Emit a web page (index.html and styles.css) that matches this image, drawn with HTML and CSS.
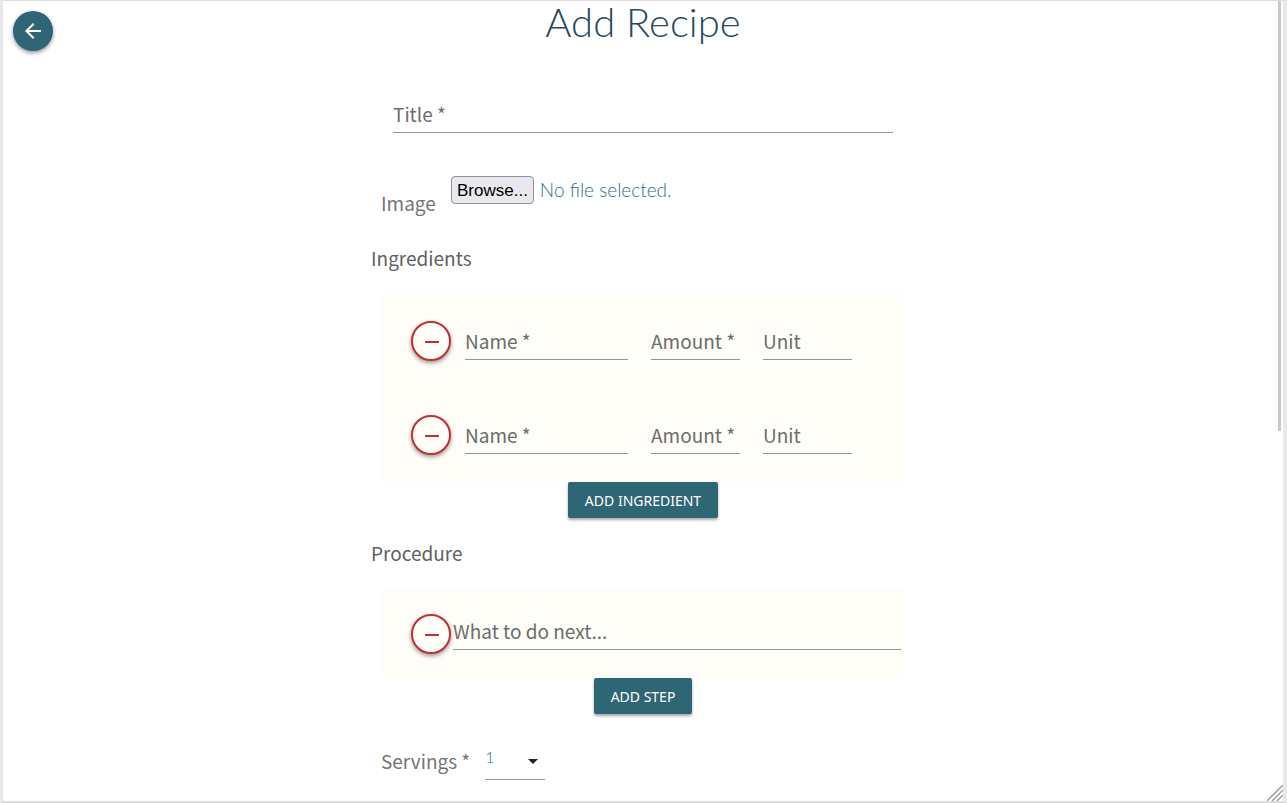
FILE: index.html
```html
<!DOCTYPE html>
<html lang="en">
<head>
<meta charset="utf-8">
<title>Add Recipe</title>
<link rel="stylesheet" href="styles.css">
</head>
<body>
<main class="window">
  <button class="round back" type="button" aria-label="Back">
    <svg width="24" height="24" viewBox="0 0 24 24" fill="currentColor" aria-hidden="true"><path d="M20 11H7.83l5.59-5.59L12 4l-8 8 8 8 1.41-1.41L7.83 13H20v-2z"/></svg>
  </button>
  <h1 class="heading">Add Recipe</h1>
  <form class="form">
    <input class="field title" type="text" placeholder="Title *" aria-label="Title">
    <div class="image-row">
      <span class="image-label">Image</span>
      <input class="file-input" id="image" type="file">
      <label class="browse" for="image">Browse...</label>
      <span class="file-name">No file selected.</span>
    </div>

    <h2 class="section">Ingredients</h2>
    <div class="panel">
      <div class="row">
        <button class="round remove" type="button" aria-label="Remove ingredient"><svg width="24" height="24" viewBox="0 0 24 24" fill="currentColor" aria-hidden="true"><path d="M6 12h14v2H6z"/></svg></button>
        <input class="field name" type="text" placeholder="Name *" aria-label="Name">
        <input class="field short" type="text" placeholder="Amount *" aria-label="Amount">
        <input class="field short" type="text" placeholder="Unit" aria-label="Unit">
      </div>
      <div class="row">
        <button class="round remove" type="button" aria-label="Remove ingredient"><svg width="24" height="24" viewBox="0 0 24 24" fill="currentColor" aria-hidden="true"><path d="M6 12h14v2H6z"/></svg></button>
        <input class="field name" type="text" placeholder="Name *" aria-label="Name">
        <input class="field short" type="text" placeholder="Amount *" aria-label="Amount">
        <input class="field short" type="text" placeholder="Unit" aria-label="Unit">
      </div>
    </div>
    <button class="add" type="button">ADD INGREDIENT</button>

    <h2 class="section">Procedure</h2>
    <div class="panel">
      <div class="row step">
        <button class="round remove" type="button" aria-label="Remove step"><svg width="24" height="24" viewBox="0 0 24 24" fill="currentColor" aria-hidden="true"><path d="M6 12h14v2H6z"/></svg></button>
        <input class="field what" type="text" placeholder="What to do next..." aria-label="Step">
      </div>
    </div>
    <button class="add" type="button">ADD STEP</button>

    <div class="servings-row">
      <label for="servings">Servings *</label>
      <div class="select-wrap">
        <select class="servings" id="servings"><option>1</option><option>2</option><option>3</option><option>4</option></select>
        <svg class="caret" width="10" height="5" viewBox="0 0 10 5" aria-hidden="true"><path d="M0 0h10L5 5z" fill="#212121"/></svg>
      </div>
    </div>
  </form>
  <div class="thumb"></div>
  <svg class="grip" width="16" height="16" viewBox="0 0 16 16" stroke="#999" stroke-width="1.4" aria-hidden="true"><path d="M0 16 16 0M5 16 16 5M10 16l6-6"/></svg>
</main>
</body>
</html>
```
FILE: styles.css
```css
* { box-sizing: border-box; }

body {
  margin: 0;
  background: #f0f0f0;
  color: #616161;
  font: 19px/28px "Noto Sans CJK SC", "Noto Sans", sans-serif;
}

.window {
  position: relative;
  height: 100vh;
  overflow: hidden;
  background: #fff;
  border: solid #ddd;
  border-width: 1px 4px 2px 3px;
  border-left-color: #e8e8e8;
  border-right-color: #e8e8e8;
}

.heading {
  margin: 0;
  color: #2b4a60;
  font: 300 40px/42px Lato, sans-serif;
  text-align: center;
}

.round {
  display: grid;
  place-items: center;
  flex: none;
  width: 40px;
  height: 40px;
  padding: 0;
  border: 0;
  border-radius: 50%;
  box-shadow: 0 2px 4px rgba(0, 0, 0, .4);
}

.back {
  position: absolute;
  top: 10px;
  left: 10px;
  background: #2f6675;
  color: #fff;
}

.remove {
  border: 2px solid #c03035;
  background: #fefdf8;
  color: #c03035;
}

.form {
  display: flex;
  flex-direction: column;
  width: 100%;
  max-width: 544px;
  margin: 0 auto;
}

.field {
  min-width: 0;
  height: 36px;
  padding: 0 0 3px;
  border: 0;
  border-bottom: 1px solid #949494;
  border-radius: 0;
  background: transparent;
  color: #616161;
  font: inherit;
}

.field::placeholder { color: #6d6d6d; opacity: 1; }

.title { margin: 54px 22px 0; }

.image-row {
  display: flex;
  align-items: flex-start;
  margin: 43px 11px 0 10px;
}

.image-label { width: 70px; padding-top: 13px; color: #757575; }

.file-input { position: absolute; opacity: 0; pointer-events: none; }

.browse {
  height: 28px;
  padding: 0 5px;
  border: 1px solid #8f8f9d;
  border-radius: 4px;
  background: #e9e9ed;
  color: #000;
  font: 17px/27px "Liberation Sans", sans-serif;
}

.file-name {
  margin-left: 6px;
  color: #336f86;
  font: 300 19px/28px Lato, sans-serif;
}

.section {
  margin: 27px 0 22px;
  font-size: 19px;
  font-weight: 400;
}

.panel { margin: 0 11px; background: #fefdf8; }

.row {
  display: flex;
  align-items: center;
  gap: 23px;
  height: 94px;
  padding: 0 52px 0 29px;
}

.row .field { margin-top: 2px; }
.row .name { flex: 1; margin-left: -9px; }
.short { width: 89px; }

.step {
  height: 89px;
  gap: 2px;
  padding-right: 3px;
}

.row .what { flex: 1; margin: 0 0 4px; padding-bottom: 1px; }

.add {
  align-self: center;
  height: 36px;
  padding: 2px 17px 0;
  border: 0;
  border-radius: 2px;
  background: #2f6675;
  box-shadow: 0 2px 3px rgba(0, 0, 0, .35);
  color: #fff;
  font: 14px/20px "Noto Sans", sans-serif;
}

.add + .section { margin-top: 21px; }

.servings-row {
  display: flex;
  align-items: flex-start;
  gap: 15px;
  margin: 27px 11px 0 10px;
  color: #757575;
}

.servings-row label { padding-top: 6px; }

.select-wrap { position: relative; }

.servings {
  appearance: none;
  display: block;
  width: 60px;
  height: 39px;
  padding: 0 0 6px;
  border: 0;
  border-bottom: 1px solid #949494;
  border-radius: 0;
  background: transparent;
  color: #336f86;
  font: 300 16px/24px Lato, sans-serif;
}

.caret { position: absolute; top: 18px; right: 7px; }

.thumb {
  position: absolute;
  top: 0;
  right: 2px;
  width: 3px;
  height: 430px;
  background: #c8c8c8;
}

.grip { position: absolute; right: 0; bottom: 0; }
```
